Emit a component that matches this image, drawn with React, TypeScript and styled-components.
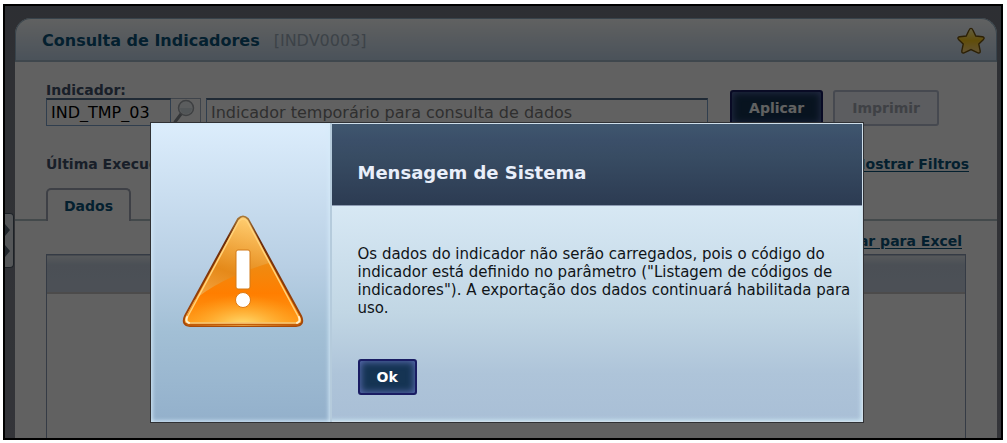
import React from 'react';
import styled, { createGlobalStyle, css } from 'styled-components';

const Global = createGlobalStyle`
  * { box-sizing: border-box; }
  html, body, #root { height: 100%; }
  body { margin: 0; background: #fff; font: 14px/16px Verdana, "DejaVu Sans", sans-serif; color: #234; overflow: hidden; }
  button, input { font-family: inherit; }
`;

const Page = styled.div`
  height: 100%;
  padding: 4px 4px 3px 3px;
`;

const Frame = styled.div`
  position: relative;
  height: 100%;
  border: 2px solid #000;
  overflow: hidden;
`;

const Screen = styled.div`
  height: 100%;
  padding: 12px 4px 0 10px;
  background: linear-gradient(#787c86, #888b96);
`;

const Panel = styled.section`
  display: flex;
  flex-direction: column;
  height: 100%;
  background: #fff;
  border-radius: 16px 16px 0 0;
`;

const PanelHeader = styled.header`
  display: flex;
  align-items: center;
  gap: 14px;
  flex: none;
  height: 44px;
  padding: 2px 10px 0 26px;
  border: 1px solid #93b0c4;
  border-bottom: 2px solid #a6bccb;
  border-radius: 16px 16px 0 0;
  background: linear-gradient(#fdffff, #c4d8ec);
  font-size: 16px;
  h1 { margin: 0; font-size: 16px; line-height: 20px; color: #0b547c; }
  span { color: #9fafbd; flex: 1; }
`;

const StarButton = styled.button`
  padding: 0;
  border: 0;
  background: none;
  svg { display: block; }
`;

const Form = styled.form`
  display: flex;
  align-items: flex-end;
  padding: 20px 58px 0 31px;
`;

const Field = styled.div`
  display: flex;
  flex-direction: column;
  flex: 1;
  label { font-weight: bold; line-height: 16px; color: #42526c; }
`;

const Inputs = styled.div`
  display: flex;
  height: 28px;
`;

const TextBox = styled.input<{ $code?: boolean }>`
  ${p => (p.$code ? css`width: 125px;` : css`flex: 1; margin-left: 5px;`)}
  min-width: 0;
  height: 28px;
  padding: 0 4px;
  border: 1px solid #7ea2cc;
  border-top: 2px solid #566f8b;
  background: #fff;
  color: ${p => (p.$code ? '#000' : '#7c7c7c')};
  font-size: 16px;
`;

const SearchButton = styled.button`
  width: 30px;
  padding: 0 1px;
  border: 1px solid #a5b4c6;
  border-left: 0;
  background: #fff;
  svg { display: block; }
`;

const Button = styled.button<{ $kind: 'primary' | 'disabled' }>`
  height: 36px;
  padding: 0 17px;
  border-radius: 3px;
  font-size: 14px;
  font-weight: bold;
  ${p => p.$kind === 'primary'
    ? css`
      border: 2px solid #1a1d63;
      background: #153453;
      box-shadow: inset 0 0 7px 1px #5a6bb0;
      color: #fff;
    `
    : css`
      border: 2px solid #b7bfd2;
      background: #f2f4fb;
      color: #a5aab6;
    `}
`;

const FormActions = styled.div`
  display: flex;
  gap: 10px;
  margin-left: 22px;
`;

const Line = styled.div<{ $top: number; $right: number }>`
  display: flex;
  justify-content: space-between;
  padding: ${p => p.$top}px ${p => p.$right}px 0 31px;
  font-weight: bold;
  color: #42526c;
  a { margin-left: auto; color: #0b547c; text-underline-offset: 2px; }
`;

const Tabs = styled.div`
  display: flex;
  margin-top: 16px;
  padding-left: 31px;
  border-bottom: 2px solid #b1c0c4;
`;

const Tab = styled.button`
  height: 33px;
  margin-bottom: -2px;
  padding: 0 16px;
  border: 2px solid #a3a9b8;
  border-bottom: 0;
  border-radius: 5px 5px 0 0;
  background: #fff;
  color: #0b547c;
  font-size: 14px;
  font-weight: bold;
`;

const Grid = styled.div`
  flex: 1;
  margin: 5px 31px 0;
  border: 1px solid #8b9bb6;
  border-bottom: 0;
`;

const GridHead = styled.div`
  height: 39px;
  border-top: 1px solid #b8c2cf;
  border-bottom: 2px solid #c9c4c4;
  background: linear-gradient(#e3e8ee, #c4d0e0 25%, #c9d2e2);
`;

const Handle = styled.button`
  position: absolute;
  left: 0;
  top: 207px;
  width: 9px;
  height: 55px;
  padding: 0;
  border: 1px solid #4e5a68;
  border-left: 0;
  border-radius: 0 4px 4px 0;
  background: #dfe5ea;
  svg { display: block; }
`;

const Overlay = styled.div`
  position: absolute;
  inset: 0;
  display: flex;
  align-items: flex-start;
  justify-content: center;
  padding: 116px 0 0 7px;
  background: rgba(0, 0, 0, 0.62);
`;

const Dialog = styled.div`
  display: flex;
  width: 714px;
  max-width: 90%;
  min-height: 301px;
  border: 1px solid #303134;
  background: #d9eaf7;
`;

const IconPane = styled.div`
  display: flex;
  justify-content: center;
  flex: none;
  width: 181px;
  padding: 91px 0 0 5px;
  border-right: 2px solid #b5cbdc;
  background: linear-gradient(#dcedfc, #b8cfe4 48%, #a2bfd5 70%, #93b0cb);
  box-shadow: inset 0 0 4px 1px #d6ebf9;
  svg { display: block; }
`;

const MessagePane = styled.div`
  flex: 1;
  display: flex;
  flex-direction: column;
  border: 1px solid #cfdfeb;
  border-left: 0;
`;

const DialogTitle = styled.h2`
  flex: none;
  margin: 0;
  padding: 39px 26px 22px;
  border-bottom: 1px solid #8d9bb2;
  background: linear-gradient(#3f566e, #3b4f69 20%, #384c63 40%, #2c3b52);
  color: #e9effa;
  font-size: 18px;
  line-height: 20px;
`;

const DialogBody = styled.div`
  flex: 1;
  padding: 39px 4px 26px 26px;
  background: linear-gradient(#d7e8f4, #c1d6e4 50%, #aec4d9 78%, #a9bfd6);
  box-shadow: inset -3px -3px 4px -2px #cfe8f4;
  color: #101418;
  p { margin: 0 0 42px; font-size: 15px; line-height: 18px; }
`;

const Star = () => (
  <svg width="30" height="30" viewBox="0 0 32 32">
    <defs>
      <linearGradient id="star" x1="0" y1="0" x2="0" y2="1">
        <stop offset="0" stopColor="#fff6a8" />
        <stop offset=".5" stopColor="#ffcb1c" />
        <stop offset="1" stopColor="#ffd98a" />
      </linearGradient>
    </defs>
    <path d="M16 2.5q1.200 0 2 1.800l3.100 6.400 7 .8q3 .6 1.200 2.800l-5 5 1.500 7.300q.2 3-2.400 2L16 25.200l-7.400 3.400q-2.600 1-2.400-2l1.500-7.300-5-5q-1.800-2.200 1.200-2.800l7-.8L14 4.300q.8-1.800 2-1.800Z" fill="url(#star)" stroke="#75550f" strokeWidth="1.500" />
  </svg>
);

const Magnifier = () => (
  <svg width="26" height="26" viewBox="0 0 26 26" fill="none">
    <path d="m9 15-6 8" stroke="#8a8e93" strokeWidth="3" strokeLinecap="round" />
    <circle cx="14" cy="9" r="7.500" fill="#eef3f6" stroke="#a3a8ad" strokeWidth="1.500" />
    <path d="M8 9h12a6 6 0 0 1-12 0Z" fill="#d8e1e6" />
  </svg>
);

const Warning = () => (
  <svg width="122" height="116" viewBox="0 0 122 116">
    <defs>
      <linearGradient id="base" x1="0" y1="0" x2="0" y2="1">
        <stop offset="0" stopColor="#ffc75f" />
        <stop offset=".45" stopColor="#f08a10" />
        <stop offset=".7" stopColor="#ff7e00" />
        <stop offset="1" stopColor="#ff9d1c" />
      </linearGradient>
      <linearGradient id="gloss" x1=".6" y1="0" x2=".3" y2="1">
        <stop offset="0" stopColor="#ffd27c" stopOpacity=".6" />
        <stop offset=".5" stopColor="#e08a1e" stopOpacity=".7" />
        <stop offset="1" stopColor="#ffc878" stopOpacity=".9" />
      </linearGradient>
      <linearGradient id="edge" x1="0" y1="0" x2="0" y2="1">
        <stop offset="0" stopColor="#a87838" />
        <stop offset=".2" stopColor="#6a2a0a" />
        <stop offset="1" stopColor="#a84a08" />
      </linearGradient>
      <radialGradient id="glow" cx=".5" cy="1" r=".5">
        <stop offset="0" stopColor="#ffe27a" />
        <stop offset="1" stopColor="#ffb22c" stopOpacity="0" />
      </radialGradient>
      <clipPath id="shape"><path d="M56 6q5-6 10 0l52 96q3 9-4 10H8q-7-1-4-10Z" /></clipPath>
    </defs>
    <path d="M56 5q5-5 10 0l53 97q4 9-5 10H8q-9-1-5-10Z" fill="url(#base)" stroke="url(#edge)" strokeWidth="2" />
    <g clipPath="url(#shape)">
      <path d="M61 0 0 110V98Q26 68 87 49L66 0Z" fill="url(#gloss)" />
      <rect x="0" y="50" width="122" height="62" fill="url(#glow)" />
      <path d="M4 110h114" stroke="#c45c08" strokeWidth="3" />
    </g>
    <path d="M57 7q4-4 8 0l51 95q3 6-2 7H8q-5-1-2-7Z" fill="none" stroke="#ffd37c" strokeWidth="1.500" />
    <path d="M5 103q-2 5 2 6M117 103q2 5-2 6" fill="none" stroke="#fff0cc" strokeWidth="2" strokeLinecap="round" />
    <rect x="54" y="36" width="14" height="39" rx="2" fill="#fff" stroke="#d27a18" />
    <circle cx="61" cy="86" r="7.500" fill="#fff" stroke="#e07a10" />
  </svg>
);

const Chevrons = () => (
  <svg width="8" height="53" viewBox="0 0 8 53" fill="#5a6876">
    <path d="M0 10 5 16 0 22ZM0 31l5 6-5 6Z" />
  </svg>
);

export default function App() {
  return (
    <Page>
      <Global />
      <Frame>
        <Screen>
          <Panel>
            <PanelHeader>
              <h1>Consulta de Indicadores</h1>
              <span>[INDV0003]</span>
              <StarButton aria-label="Favorito"><Star /></StarButton>
            </PanelHeader>
            <Form onSubmit={e => e.preventDefault()}>
              <Field>
                <label htmlFor="code">Indicador:</label>
                <Inputs>
                  <TextBox id="code" $code defaultValue="IND_TMP_03" />
                  <SearchButton type="button" aria-label="Pesquisar"><Magnifier /></SearchButton>
                  <TextBox aria-label="Descrição" readOnly value="Indicador temporário para consulta de dados" />
                </Inputs>
              </Field>
              <FormActions>
                <Button $kind="primary">Aplicar</Button>
                <Button $kind="disabled" type="button" disabled>Imprimir</Button>
              </FormActions>
            </Form>
            <Line $top={30} $right={28}>
              <span>Última Execução:</span>
              <a href="#filtros">Mostrar Filtros</a>
            </Line>
            <Tabs role="tablist"><Tab role="tab" aria-selected>Dados</Tab></Tabs>
            <Line $top={12} $right={35}><a href="#excel">Exportar para Excel</a></Line>
            <Grid><GridHead /></Grid>
          </Panel>
        </Screen>
        <Handle aria-label="Expandir menu"><Chevrons /></Handle>
        <Overlay>
          <Dialog role="dialog" aria-modal aria-labelledby="title">
            <IconPane><Warning /></IconPane>
            <MessagePane>
              <DialogTitle id="title">Mensagem de Sistema</DialogTitle>
              <DialogBody>
                <p>
                  Os dados do indicador não serão carregados, pois o código do indicador está definido no
                  parâmetro ("Listagem de códigos de indicadores"). A exportação dos dados continuará
                  habilitada para uso.
                </p>
                <Button $kind="primary">Ok</Button>
              </DialogBody>
            </MessagePane>
          </Dialog>
        </Overlay>
      </Frame>
    </Page>
  );
}
